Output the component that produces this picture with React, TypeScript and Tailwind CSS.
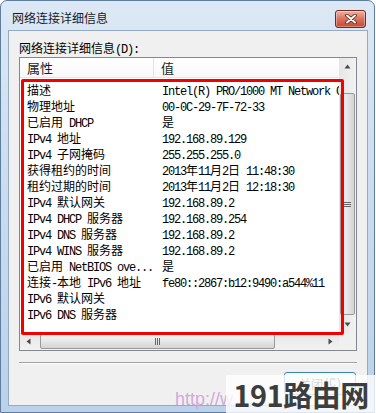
import React from 'react';

const CJK = /([\u2e80-\u9fff\uff00-\uffef]+)/;

const cjkCls = "font-['Noto_Sans_CJK_SC',sans-serif] text-[12px]";
const monoCls = "font-['Liberation_Mono',monospace] text-[12px] tracking-[-1.2px]";

// split a label into CJK runs (full width) and latin runs (half width mono)
function Mixed({ text }: { text: string }) {
  return (
    <>
      {text
        .split(CJK)
        .filter(Boolean)
        .map((part, i) =>
          CJK.test(part) ? (
            <span key={i} className={cjkCls}>
              {part}
            </span>
          ) : (
            <span key={i} className={monoCls}>
              {part}
            </span>
          )
        )}
    </>
  );
}

const rows: [string, string][] = [
  ['描述', 'Intel(R) PRO/1000 MT Network Connection'],
  ['物理地址', '00-0C-29-7F-72-33'],
  ['已启用 DHCP', '是'],
  ['IPv4 地址', '192.168.89.129'],
  ['IPv4 子网掩码', '255.255.255.0'],
  ['获得租约的时间', '2013年11月2日 11:48:30'],
  ['租约过期的时间', '2013年11月2日 12:18:30'],
  ['IPv4 默认网关', '192.168.89.2'],
  ['IPv4 DHCP 服务器', '192.168.89.254'],
  ['IPv4 DNS 服务器', '192.168.89.2'],
  ['IPv4 WINS 服务器', '192.168.89.2'],
  ['已启用 NetBIOS ove...', '是'],
  ['连接-本地 IPv6 地址', 'fe80::2867:b12:9490:a544%11'],
  ['IPv6 默认网关', ''],
  ['IPv6 DNS 服务器', ''],
];

function Arrow({ dir }: { dir: 'up' | 'down' | 'left' | 'right' }) {
  const pts = {
    up: '0.5,4.5 3.5,0.5 6.5,4.5',
    down: '0.5,0.5 3.5,4.5 6.5,0.5',
    left: '4.5,0.5 0.5,3.5 4.5,6.5',
    right: '0.5,0.5 4.5,3.5 0.5,6.5',
  }[dir];
  const vertical = dir === 'up' || dir === 'down';
  return (
    <svg width={vertical ? 7 : 5} height={vertical ? 5 : 7} viewBox={vertical ? '0 0 7 5' : '0 0 5 7'}>
      <polygon points={pts} fill="#4a4a4a" />
    </svg>
  );
}

export default function App() {
  return (
    <div className="relative w-[376px] h-[413px] overflow-hidden bg-white">
      {/* window frame */}
      <div className="flex flex-col w-[375px] h-[413px] rounded-t-[7px] border border-[#5f7d9e] bg-gradient-to-b from-[#dce8f5] via-[#c9dbef] to-[#bcd1ea]">
        {/* title bar */}
        <div className="relative h-[29px] shrink-0">
          <div className="absolute left-[11px] top-[10px] leading-[14px] text-[#1b1b1b] font-['Noto_Sans_CJK_SC',sans-serif] text-[12px]">
            网络连接详细信息
          </div>
          <div className="absolute left-[334px] top-[9px] w-[31px] h-[18px] rounded-[3px] border border-[#6e2a20] bg-gradient-to-b from-[#eeb3a3] via-[#d8725c] to-[#c4492f] flex items-center justify-center shadow-[inset_0_0_0_1px_rgba(255,255,255,0.35)]">
            <svg width="12" height="10" viewBox="0 0 12 10">
              <path d="M2 1.5 L10 8.5 M10 1.5 L2 8.5" stroke="#5a1c12" strokeWidth="3.6" strokeLinecap="round" />
              <path d="M2 1.5 L10 8.5 M10 1.5 L2 8.5" stroke="#ffffff" strokeWidth="2" strokeLinecap="round" />
            </svg>
          </div>
        </div>

        {/* client area */}
        <div className="ml-[7px] mr-[6px] h-[376px] shrink-0 border border-[#95abc4] bg-[#f0f0f0] px-[10px] flex flex-col">
          <div className="mt-[8px] h-[16px] leading-[16px] text-black whitespace-nowrap">
            <Mixed text="网络连接详细信息(D):" />
          </div>

          {/* list view */}
          <div className="mt-[2px] w-[338px] h-[294px] border border-[#828790] bg-white flex flex-col">
            <div className="flex h-[275px]">
              <div className="w-[319px] overflow-hidden">
                {/* header */}
                <div className="flex h-[20px] items-center border-b border-[#e5e5e5] bg-gradient-to-b from-white to-[#f7f8fa] font-['Noto_Sans_CJK_SC',sans-serif] text-[13px] text-[#1e1e1e]">
                  <div className="w-[134px] h-full pl-[7px] flex items-center border-r border-[#e0e3e8]">属性</div>
                  <div className="pl-[7px]">值</div>
                </div>
                {/* rows */}
                <div className="pt-[3px]">
                  {rows.map(([k, v]) => (
                    <div key={k} className="flex h-[16px] leading-[16px] whitespace-nowrap text-black">
                      <div className="w-[142px] pl-[7px] shrink-0">
                        <Mixed text={k} />
                      </div>
                      <div>
                        <Mixed text={v} />
                      </div>
                    </div>
                  ))}
                </div>
              </div>

              {/* vertical scrollbar */}
              <div className="w-[17px] flex flex-col bg-gradient-to-r from-[#e6e6e6] to-[#f2f2f2]">
                <div className="h-[17px] flex items-center justify-center">
                  <Arrow dir="up" />
                </div>
                <div className="flex-1 flex flex-col px-[1px]">
                  <div className="mt-[18px] h-[222px] rounded-[2px] border border-[#9a9a9a] bg-gradient-to-r from-[#f4f4f4] via-[#e6e6e6] to-[#d4d4d4] flex flex-col items-center justify-center gap-[1px]">
                    <div className="w-[7px] h-[1px] bg-[#666]" />
                    <div className="w-[7px] h-[1px] bg-[#666]" />
                    <div className="w-[7px] h-[1px] bg-[#666]" />
                  </div>
                </div>
                <div className="h-[17px] flex items-center justify-center">
                  <Arrow dir="down" />
                </div>
              </div>
            </div>

            {/* horizontal scrollbar */}
            <div className="flex h-[17px]">
              <div className="w-[319px] flex bg-gradient-to-b from-[#e6e6e6] to-[#f2f2f2]">
                <div className="w-[17px] flex items-center justify-center">
                  <Arrow dir="left" />
                </div>
                <div className="flex-1 flex py-[1px]">
                  <div className="ml-[3px] w-[235px] rounded-[2px] border border-[#9a9a9a] bg-gradient-to-b from-[#f4f4f4] via-[#e6e6e6] to-[#d4d4d4] flex items-center justify-center gap-[1px]">
                    <div className="w-[1px] h-[7px] bg-[#666]" />
                    <div className="w-[1px] h-[7px] bg-[#666]" />
                    <div className="w-[1px] h-[7px] bg-[#666]" />
                  </div>
                </div>
                <div className="w-[17px] flex items-center justify-center">
                  <Arrow dir="right" />
                </div>
              </div>
              <div className="w-[17px] bg-[#f0f0f0]" />
            </div>
          </div>

          {/* separator */}
          <div className="mt-[11px] w-[338px] border-t border-[#a0a0a0] border-b border-b-white" />

          {/* close button */}
          <div className="mt-[8px] flex justify-end pr-[1px]">
            <div className="w-[72px] h-[23px] rounded-[3px] border border-[#3c7fb1] bg-gradient-to-b from-[#f5fbfe] to-[#d9eefb] flex items-center justify-center text-[#333] whitespace-nowrap">
              <Mixed text="关闭(C)" />
            </div>
          </div>
        </div>
      </div>

      {/* red annotation box */}
      <div className="absolute left-[21px] top-[79px] w-[323px] h-[256px] rounded-[2px] border-[3px] border-[#f20000]" />

      {/* watermark */}
      <div className="absolute left-[175px] top-[389px] font-['Liberation_Sans',sans-serif] text-[18px] leading-[20px] text-[#d1a9da]">
        http://w
      </div>
      <div className="absolute left-[226px] top-[375px] w-[150px] h-[38px] bg-white/80 flex items-center justify-center">
        <span className="font-['Noto_Sans_CJK_SC',sans-serif] font-bold text-[29px] leading-[32px] tracking-[-0.5px] text-[#3d3d3d]">
          191路由网
        </span>
      </div>
    </div>
  );
}
